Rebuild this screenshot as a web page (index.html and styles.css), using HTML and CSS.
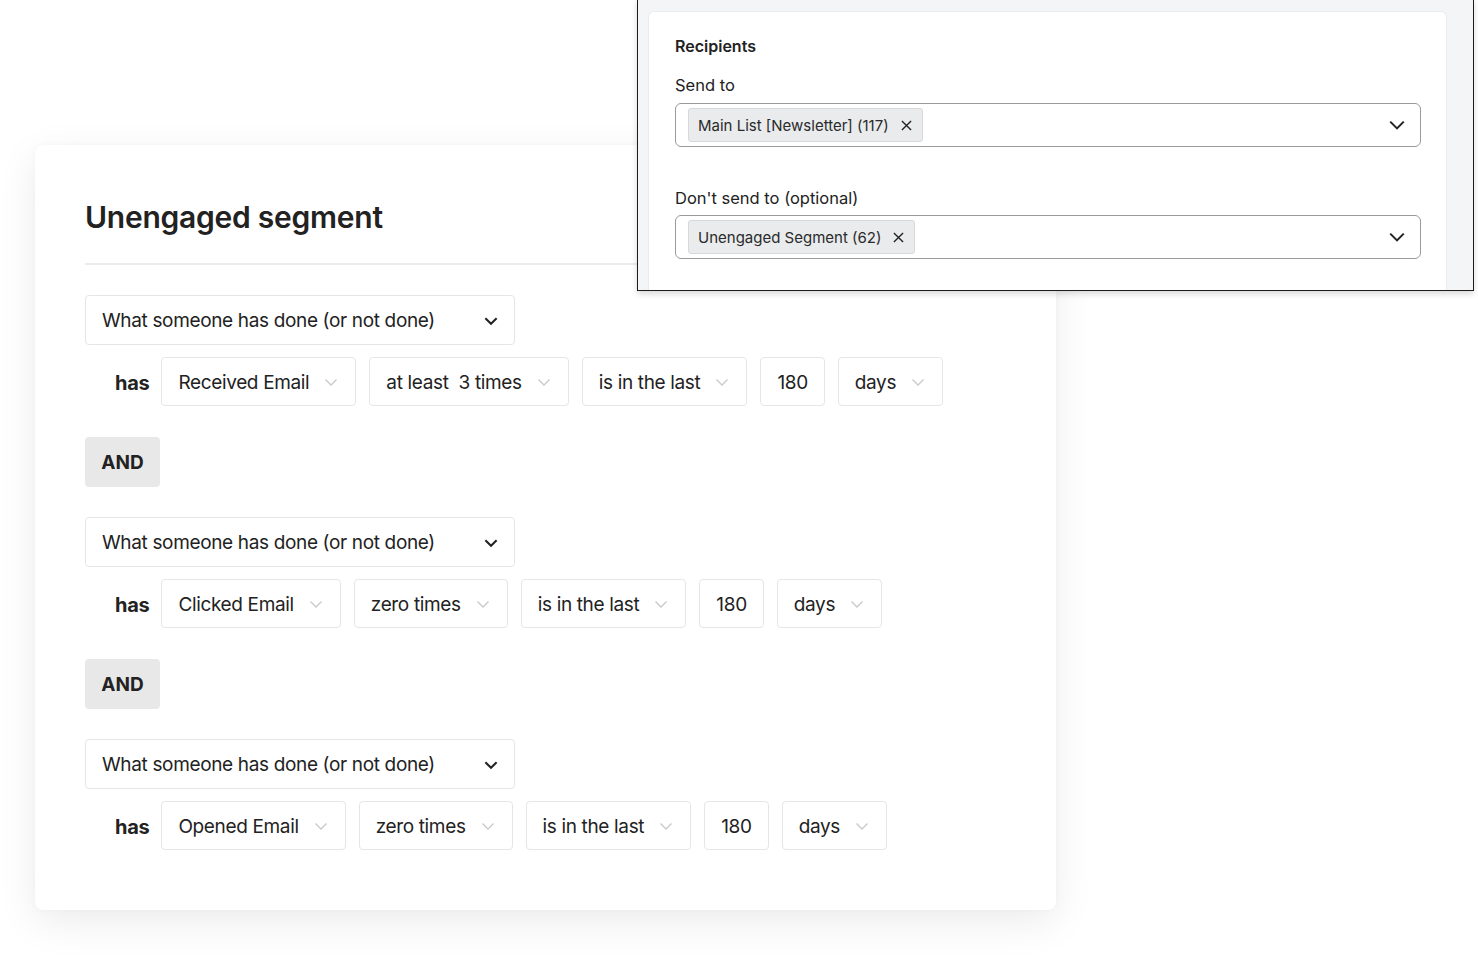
FILE: index.html
```html
<!DOCTYPE html>
<html lang="en">
<head>
  <meta charset="UTF-8">
  <meta name="viewport" content="width=device-width, initial-scale=1.0">
  <title>Unengaged segment</title>
  <link rel="stylesheet" href="styles.css">
</head>
<body>
  <div class="segment-card">
    <h1>Unengaged segment</h1>
    <div class="divider"></div>

    <div class="condition">
      <div class="select wide">
        <span>What someone has done (or not done)</span>
        <svg class="chev dark" viewBox="0 0 16 16"><path d="M3 5.5l5 5 5-5"/></svg>
      </div>
      <div class="row">
        <span class="has">has</span>
        <div class="select">Received Email <svg class="chev" viewBox="0 0 16 16"><path d="M2.5 5.5l5.5 5.5 5.5-5.5"/></svg></div>
        <div class="select">at least&nbsp; 3 times <svg class="chev" viewBox="0 0 16 16"><path d="M2.5 5.5l5.5 5.5 5.5-5.5"/></svg></div>
        <div class="select">is in the last <svg class="chev" viewBox="0 0 16 16"><path d="M2.5 5.5l5.5 5.5 5.5-5.5"/></svg></div>
        <div class="select">180</div>
        <div class="select">days <svg class="chev" viewBox="0 0 16 16"><path d="M2.5 5.5l5.5 5.5 5.5-5.5"/></svg></div>
      </div>
    </div>

    <div class="and-btn">AND</div>

    <div class="condition">
      <div class="select wide">
        <span>What someone has done (or not done)</span>
        <svg class="chev dark" viewBox="0 0 16 16"><path d="M3 5.5l5 5 5-5"/></svg>
      </div>
      <div class="row">
        <span class="has">has</span>
        <div class="select">Clicked Email <svg class="chev" viewBox="0 0 16 16"><path d="M2.5 5.5l5.5 5.5 5.5-5.5"/></svg></div>
        <div class="select">zero times <svg class="chev" viewBox="0 0 16 16"><path d="M2.5 5.5l5.5 5.5 5.5-5.5"/></svg></div>
        <div class="select">is in the last <svg class="chev" viewBox="0 0 16 16"><path d="M2.5 5.5l5.5 5.5 5.5-5.5"/></svg></div>
        <div class="select">180</div>
        <div class="select">days <svg class="chev" viewBox="0 0 16 16"><path d="M2.5 5.5l5.5 5.5 5.5-5.5"/></svg></div>
      </div>
    </div>

    <div class="and-btn">AND</div>

    <div class="condition">
      <div class="select wide">
        <span>What someone has done (or not done)</span>
        <svg class="chev dark" viewBox="0 0 16 16"><path d="M3 5.5l5 5 5-5"/></svg>
      </div>
      <div class="row">
        <span class="has">has</span>
        <div class="select">Opened Email <svg class="chev" viewBox="0 0 16 16"><path d="M2.5 5.5l5.5 5.5 5.5-5.5"/></svg></div>
        <div class="select">zero times <svg class="chev" viewBox="0 0 16 16"><path d="M2.5 5.5l5.5 5.5 5.5-5.5"/></svg></div>
        <div class="select">is in the last <svg class="chev" viewBox="0 0 16 16"><path d="M2.5 5.5l5.5 5.5 5.5-5.5"/></svg></div>
        <div class="select">180</div>
        <div class="select">days <svg class="chev" viewBox="0 0 16 16"><path d="M2.5 5.5l5.5 5.5 5.5-5.5"/></svg></div>
      </div>
    </div>
  </div>

  <div class="recipients-window">
    <div class="recipients-card">
      <h3>Recipients</h3>
      <label>Send to</label>
      <div class="multi-select">
        <span class="chip">Main List [Newsletter] (117) <svg class="chip-x" viewBox="0 0 12 12"><path d="M1 1l10 10M11 1L1 11"/></svg></span>
        <svg class="chev-lg" viewBox="0 0 16 16"><path d="M2 5l6 6 6-6"/></svg>
      </div>
      <label class="spaced">Don't send to (optional)</label>
      <div class="multi-select">
        <span class="chip">Unengaged Segment (62) <svg class="chip-x" viewBox="0 0 12 12"><path d="M1 1l10 10M11 1L1 11"/></svg></span>
        <svg class="chev-lg" viewBox="0 0 16 16"><path d="M2 5l6 6 6-6"/></svg>
      </div>
    </div>
  </div>
</body>
</html>
```

FILE: styles.css
```css
html, body {
  margin: 0;
  padding: 0;
  background: #fff;
}

body {
  width: 1478px;
  height: 966px;
  position: relative;
  overflow: hidden;
  font-family: Inter, "Noto Sans", sans-serif;
  color: #222;
}

.segment-card {
  width: 1021px;
  margin: 145px 0 0 35px;
  padding: 52px 50px 60px;
  box-sizing: border-box;
  background: #fff;
  border-radius: 8px;
  box-shadow: 0 12px 40px rgba(0,0,0,0.08), 0 0 6px rgba(0,0,0,0.03);
}

.segment-card h1 {
  margin: 0;
  font-size: 30px;
  line-height: 40px;
  font-weight: 600;
  letter-spacing: -0.25px;
  color: #222;
}

.divider {
  height: 2px;
  background: #ececec;
  margin: 26px 0 30px;
}

.condition {
  display: flex;
  flex-direction: column;
  gap: 12px;
}

.select {
  display: inline-flex;
  align-items: center;
  gap: 14px;
  height: 49px;
  padding: 1px 16px 0 16px;
  box-sizing: border-box;
  border: 1px solid #e6e6e6;
  border-radius: 4px;
  background: #fff;
  font-size: 19px;
  letter-spacing: -0.35px;
  color: #222;
  white-space: nowrap;
}

.select.wide {
  width: 430px;
  height: 50px;
  justify-content: space-between;
  padding-right: 14px;
}

.row {
  display: flex;
  align-items: center;
  gap: 13px;
  padding-left: 30px;
}

.has {
  font-size: 20px;
  font-weight: 700;
  letter-spacing: -0.3px;
  margin-right: -1px;
  padding-top: 2px;
}

.chev {
  width: 16px;
  height: 16px;
  fill: none;
  stroke: #c8c8c8;
  stroke-width: 1.3;
}

.chev.dark {
  width: 18px;
  height: 18px;
  stroke: #222;
  stroke-width: 1.8;
}

.and-btn {
  width: 75px;
  height: 50px;
  margin: 31px 0 30px;
  display: flex;
  align-items: center;
  justify-content: center;
  background: #e8e8e8;
  border-radius: 4px;
  font-size: 19px;
  font-weight: 700;
  color: #222;
}

/* overlay window */
.recipients-window {
  position: absolute;
  left: 637px;
  top: -1px;
  width: 837px;
  height: 292px;
  box-sizing: border-box;
  border: 1px solid #1c1c1c;
  background: #f4f5f6;
  padding: 11px 26px 0 10px;
  box-shadow: 0 3px 6px rgba(0,0,0,0.15);
  overflow: hidden;
}

.recipients-card {
  height: 100%;
  background: #fff;
  border-radius: 6px 6px 0 0;
  border: 1px solid #ececec;
  border-bottom: none;
  padding: 23px 25px 0 26px;
  box-sizing: border-box;
}

.recipients-card h3 {
  margin: 0 0 17px;
  font-size: 16px;
  line-height: 22px;
  font-weight: 600;
  color: #222;
}

.recipients-card label {
  display: block;
  font-size: 16.5px;
  line-height: 22px;
  color: #222;
  margin-bottom: 7px;
}

.recipients-card label.spaced {
  margin-top: 40px;
  margin-bottom: 6px;
}

.multi-select {
  height: 44px;
  box-sizing: border-box;
  border: 1px solid #9a9a9a;
  border-radius: 6px;
  display: flex;
  align-items: center;
  justify-content: space-between;
  padding: 0 14px 0 12px;
}

.chip {
  display: inline-flex;
  align-items: center;
  gap: 12px;
  height: 34px;
  box-sizing: border-box;
  padding: 0 10px 0 9px;
  background: #e9ebed;
  border: 1px solid #d6d8da;
  border-radius: 3px;
  font-size: 15px;
  color: #2a2a2a;
}

.chip-x {
  width: 11px;
  height: 11px;
  fill: none;
  stroke: #222;
  stroke-width: 1.5;
}

.chev-lg {
  width: 18px;
  height: 18px;
  fill: none;
  stroke: #222;
  stroke-width: 1.8;
}
```
